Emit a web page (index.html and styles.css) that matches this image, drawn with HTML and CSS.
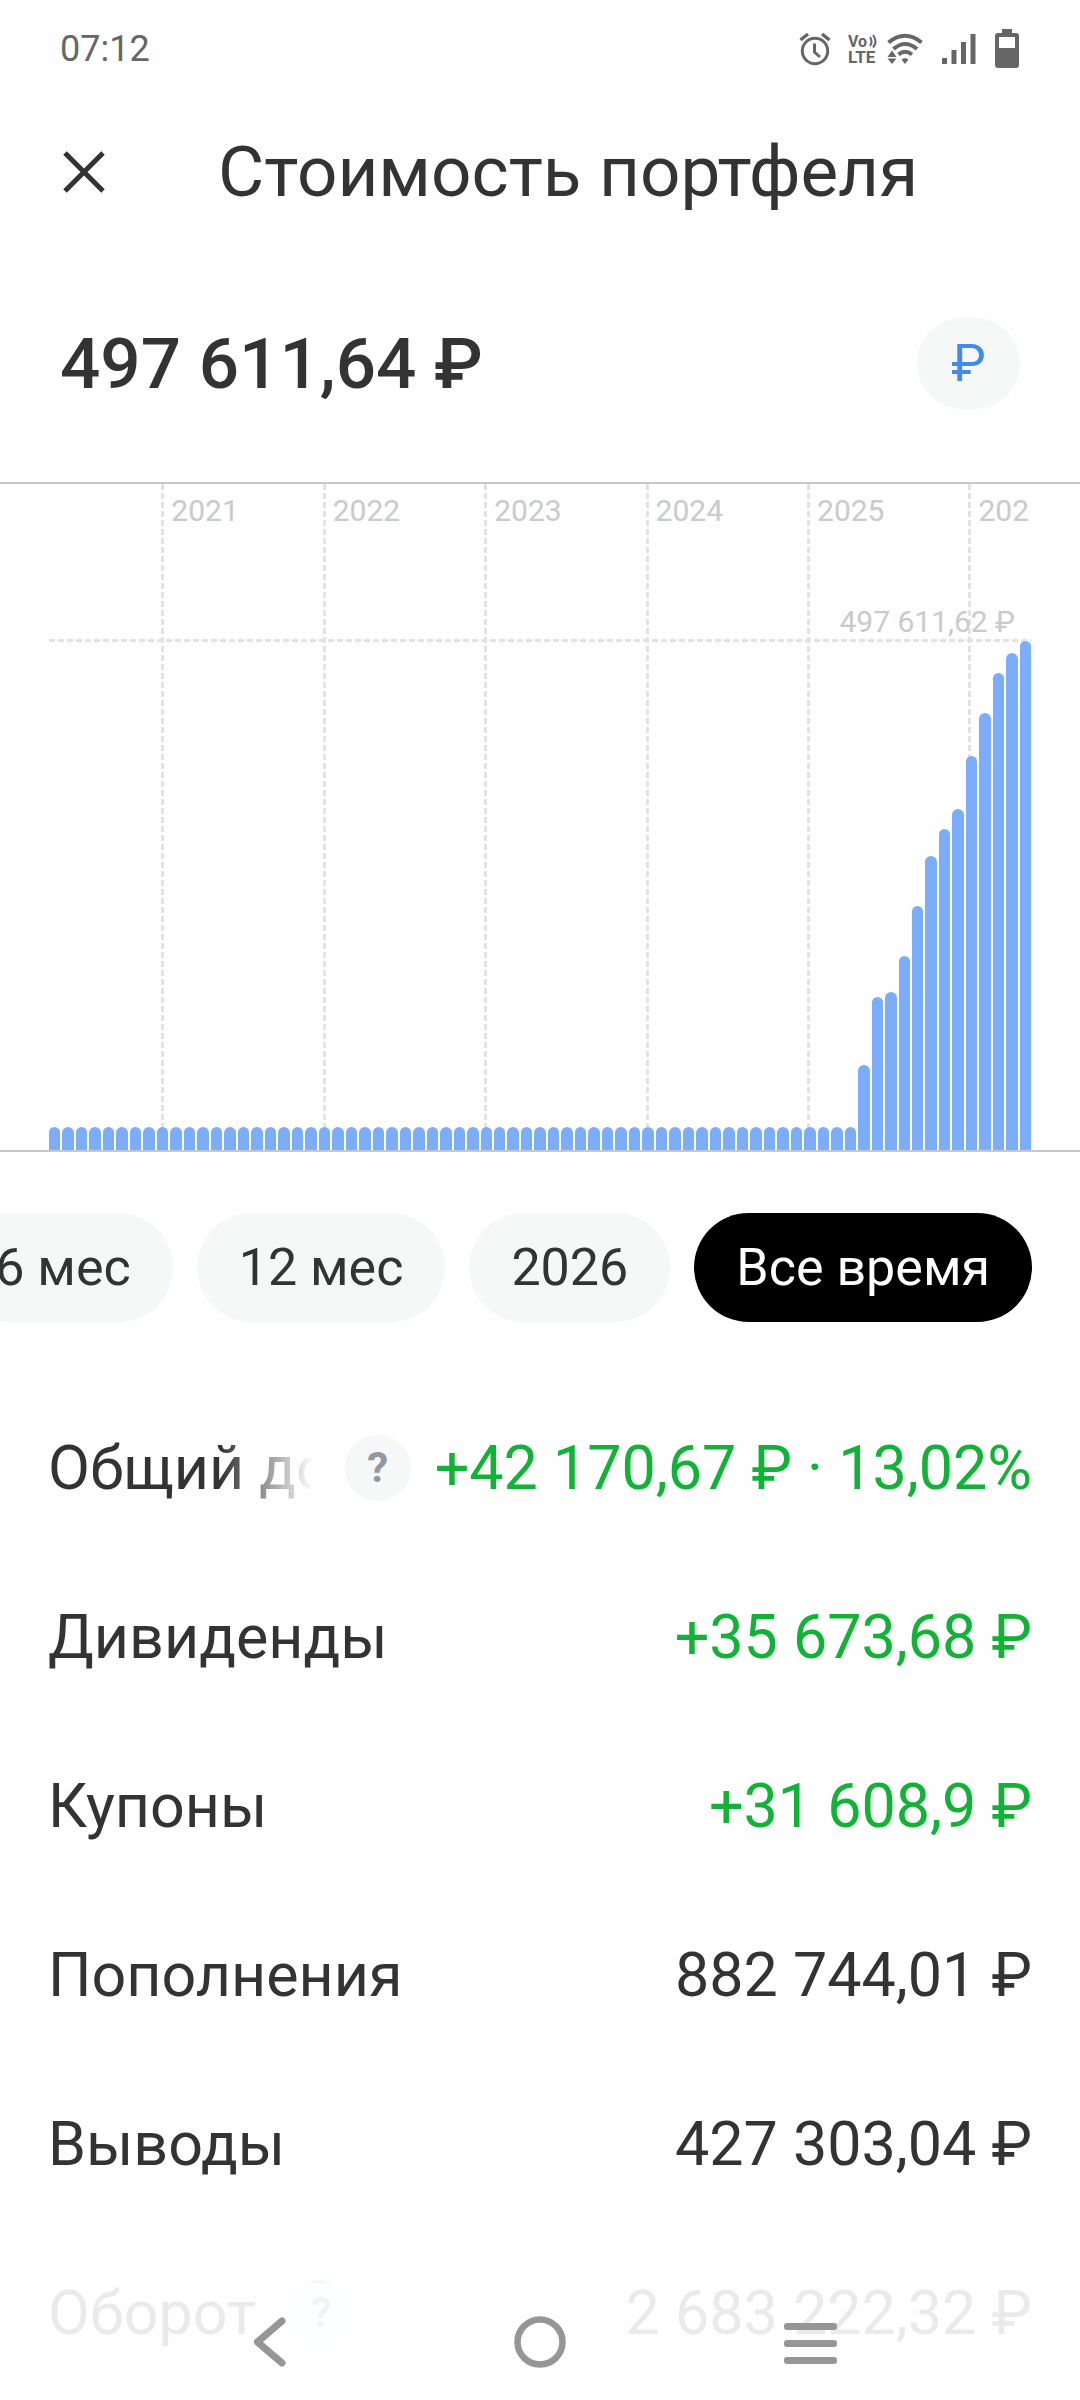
FILE: index.html
```html
<!DOCTYPE html>
<html lang="ru">
<head>
    <meta charset="UTF-8">
    <meta name="viewport" content="width=device-width, initial-scale=1.0">
    <title>Стоимость портфеля</title>
    <link rel="stylesheet" href="styles.css">
</head>
<body>

<div class="status-bar">
    <span class="clock">07:12</span>
    <div class="status-icons">
        <svg class="icon-alarm" width="32" height="34" viewBox="0 0 32 34" fill="none" stroke="#666" stroke-width="3">
            <circle cx="16" cy="19" r="12.7"/>
            <path d="M1.500 8L9 2M30.500 8L23 2" stroke-width="3.500"/>
            <path d="M15.500 11.500v8.500l5.500 5"/>
        </svg>
        <svg class="icon-volte" width="30" height="32" viewBox="0 0 30 32" fill="#666">
            <text x="0" y="14" font-size="16" font-weight="700">Vo</text>
            <path d="M22 4q3 4.500 0 9M25 2q5 6.500 0 12.500" fill="none" stroke="#666" stroke-width="2"/>
            <text x="0" y="30" font-size="17" font-weight="700">LTE</text>
        </svg>
        <svg class="icon-wifi" width="36" height="32" viewBox="0 0 36 32" fill="none" stroke="#666" stroke-width="4">
            <path d="M1.500 9.500Q18 -4 34.500 9.500"/>
            <path d="M6.500 16Q18 6 30 16"/>
            <path d="M11.500 21.500Q18 16 25 21.500"/>
            <path d="M18 31l-3.500-4.500q3.500-2.500 7 0zM5 17.500l4.500 6.500h-9zM5 31l4.500-5.500h-9z" fill="#666" stroke="none"/>
        </svg>
        <svg class="icon-signal" width="34" height="30" viewBox="0 0 34 30" fill="#666">
            <path d="M0 24h5v6H0zM9.500 16h5v14h-5zM19 8h5v22h-5zM28.500 0h5v30h-5z"/>
        </svg>
        <svg class="icon-battery" width="24" height="40" viewBox="0 0 24 40" fill="#666">
            <path fill-rule="evenodd" d="M7 0h10v4h4q3 0 3 3v29q0 3-3 3H3q-3 0-3-3V7q0-3 3-3h4zM4 8v11h16V8z"/>
        </svg>
    </div>
</div>

<header class="header">
    <button class="close-btn" type="button" aria-label="Закрыть">
        <svg width="48" height="48" viewBox="0 0 48 48" stroke="#333" stroke-width="5">
            <path d="M5 5l38 38M43 5L5 43"/>
        </svg>
    </button>
    <h1>Стоимость портфеля</h1>
</header>

<section class="total">
    <div class="total-value">497&nbsp;611,64&nbsp;₽</div>
    <button class="currency-btn" type="button" aria-label="Валюта">₽</button>
</section>

<section class="chart">
    <div class="plot">
        <div class="years" id="years"></div>
        <div class="max-line"><span>497&nbsp;611,62&nbsp;₽</span></div>
        <div class="bars" id="bars"></div>
    </div>
</section>

<div class="periods">
    <button class="chip" type="button">6 мес</button>
    <button class="chip" type="button">12 мес</button>
    <button class="chip" type="button">2026</button>
    <button class="chip active" type="button">Все время</button>
</div>

<dl class="stats">
    <div class="row">
        <dt class="fade">Общий доход</dt>
        <button class="help-btn" type="button" aria-label="Подсказка">?</button>
        <dd class="plus">+42&nbsp;170,67&nbsp;₽ · 13,02%</dd>
    </div>
    <div class="row">
        <dt>Дивиденды</dt>
        <dd class="plus">+35&nbsp;673,68&nbsp;₽</dd>
    </div>
    <div class="row">
        <dt>Купоны</dt>
        <dd class="plus">+31&nbsp;608,9&nbsp;₽</dd>
    </div>
    <div class="row">
        <dt>Пополнения</dt>
        <dd>882&nbsp;744,01&nbsp;₽</dd>
    </div>
    <div class="row">
        <dt>Выводы</dt>
        <dd>427&nbsp;303,04&nbsp;₽</dd>
    </div>
    <div class="row">
        <dt>Оборот</dt>
        <button class="help-btn" type="button" aria-label="Подсказка">?</button>
        <dd>2&nbsp;683&nbsp;222,32&nbsp;₽</dd>
    </div>
</dl>

<nav class="nav-bar">
    <button type="button" aria-label="Назад">
        <svg width="54" height="54" viewBox="0 0 54 54" fill="none" stroke="#969696" stroke-width="7" stroke-linecap="round" stroke-linejoin="round">
            <path d="M39 6L14.500 27L39 48"/>
        </svg>
    </button>
    <button type="button" aria-label="Домой">
        <svg width="54" height="54" viewBox="0 0 54 54" fill="none" stroke="#969696" stroke-width="6.500">
            <circle cx="27" cy="27" r="22.500"/>
        </svg>
    </button>
    <button type="button" aria-label="Меню">
        <svg width="54" height="54" viewBox="0 0 54 54" fill="#969696">
            <rect x="1" y="8" width="53" height="7" rx="3"/>
            <rect x="1" y="25" width="53" height="7" rx="3"/>
            <rect x="1" y="42" width="53" height="7" rx="3"/>
        </svg>
    </button>
</nav>

<script src="chart.js"></script>

</body>
</html>
```

FILE: styles.css
```css
* {
    box-sizing: border-box;
}
body {
    margin: 0;
    min-height: 100vh;
    background: #fefefe;
    color: #333;
    font-family: Roboto, "Liberation Sans", sans-serif;
    overflow-x: hidden;
}
button {
    padding: 0;
    border: none;
    background: none;
    color: inherit;
    font-family: inherit;
    cursor: pointer;
}
svg {
    display: block;
    overflow: visible;
}

/* status bar */
.status-bar {
    display: flex;
    align-items: center;
    justify-content: space-between;
    height: 98px;
    padding: 0 61px 0 60px;
    color: #666;
}
.clock {
    font-size: 36px;
}
.status-icons {
    display: flex;
    align-items: center;
}
.icon-volte {
    margin-left: 17px;
}
.icon-wifi {
    margin-left: 9px;
}
.icon-signal {
    margin-left: 19px;
}
.icon-battery {
    margin-left: 19px;
}

/* header */
.header {
    display: flex;
    align-items: center;
    gap: 110px;
    height: 147px;
    padding: 0 60px;
}
.header h1 {
    margin: 0;
    font-size: 71px;
    font-weight: 400;
    white-space: nowrap;
}
.total {
    display: flex;
    align-items: center;
    justify-content: space-between;
    height: 237px;
    padding: 0 60px;
}
.total-value {
    font-size: 71px;
    font-weight: 500;
}
.currency-btn {
    width: 103px;
    height: 91px;
    border-radius: 50px;
    background: #f6f8f8;
    color: #428be8;
    font-size: 52px;
}

/* chart */
.chart {
    border-top: 2px solid #c8c8ca;
    border-bottom: 2px solid #c8c8ca;
    padding: 0 49px;
}
.plot {
    position: relative;
    height: 666px;
    padding-top: 157px;
    overflow: hidden;
    color: #c8cacc;
    font-size: 30px;
    line-height: 36px;
}
.year {
    position: absolute;
    top: 0;
    bottom: 0;
    padding: 9px 0 0 10px;
    background: repeating-linear-gradient(#e2e2e3 0 6px, transparent 6px 9px) left / 3px 100% no-repeat;
}
.max-line {
    position: absolute;
    left: 0;
    right: 0;
    top: 120px;
    height: 38px;
    padding-right: 16px;
    text-align: right;
    background: repeating-linear-gradient(to right, #e2e2e3 0 6px, transparent 6px 9px) bottom / 100% 3px no-repeat;
}
.bars {
    position: relative;
    display: flex;
    align-items: flex-end;
    gap: 2px;
    height: 100%;
}
.bar {
    flex: 1;
    background: #7badfa;
    border-radius: 6px 6px 0 0;
}

/* periods */
.periods {
    display: flex;
    justify-content: flex-end;
    gap: 24px;
    padding: 61px 48px;
    overflow: hidden;
}
.chip {
    flex: none;
    height: 109px;
    padding: 0 42px;
    border-radius: 55px;
    background: #f6f8f8;
    font-size: 52px;
}
.chip.active {
    background: #000;
    color: #fff;
}

/* stats */
.stats {
    margin: 0;
    padding: 0 48px;
    font-size: 61px;
}
.row {
    display: flex;
    align-items: center;
    height: 169px;
    white-space: nowrap;
}
.row dt {
    flex: 0 1 auto;
    min-width: 0;
}
.row dt.fade {
    overflow: hidden;
    -webkit-mask-image: linear-gradient(to right, #000 65%, transparent);
    mask-image: linear-gradient(to right, #000 65%, transparent);
}
.row dd {
    margin: 0 0 0 auto;
    padding-left: 24px;
}
.row dd.plus {
    color: #10b335;
}
.help-btn {
    flex: none;
    width: 66px;
    height: 66px;
    margin-left: 32px;
    border-radius: 50%;
    background: #f6f8f8;
    color: #9299a2;
    font-size: 42px;
    font-weight: 700;
}

/* system navigation */
.nav-bar {
    position: fixed;
    left: 0;
    right: 0;
    bottom: 0;
    display: flex;
    height: 117px;
    padding: 0 12.5%;
    background: rgba(254, 254, 254, 0.9);
}
.nav-bar button {
    display: flex;
    flex: 1;
    align-items: center;
    justify-content: center;
}
```

FILE: chart.js
```js
const max = 509;
const emptyMonths = 60;
const months = [85, 153, 158, 194, 244, 294, 321, 341, 394, 437, 477, 497, 509];
const values = Array(emptyMonths).fill(23).concat(months);

document.getElementById("bars").innerHTML = values
    .map(v => `<div class="bar" style="height: ${v / max * 100}%"></div>`)
    .join("");

// each year starts in January, the first one is the ninth bar
const years = [2021, 2022, 2023, 2024, 2025, 2026];
document.getElementById("years").innerHTML = years
    .map((year, i) => {
        const left = (8.35 + i * 12) / values.length * 100;
        return `<div class="year" style="left: ${left}%">${year}</div>`;
    })
    .join("");
```
